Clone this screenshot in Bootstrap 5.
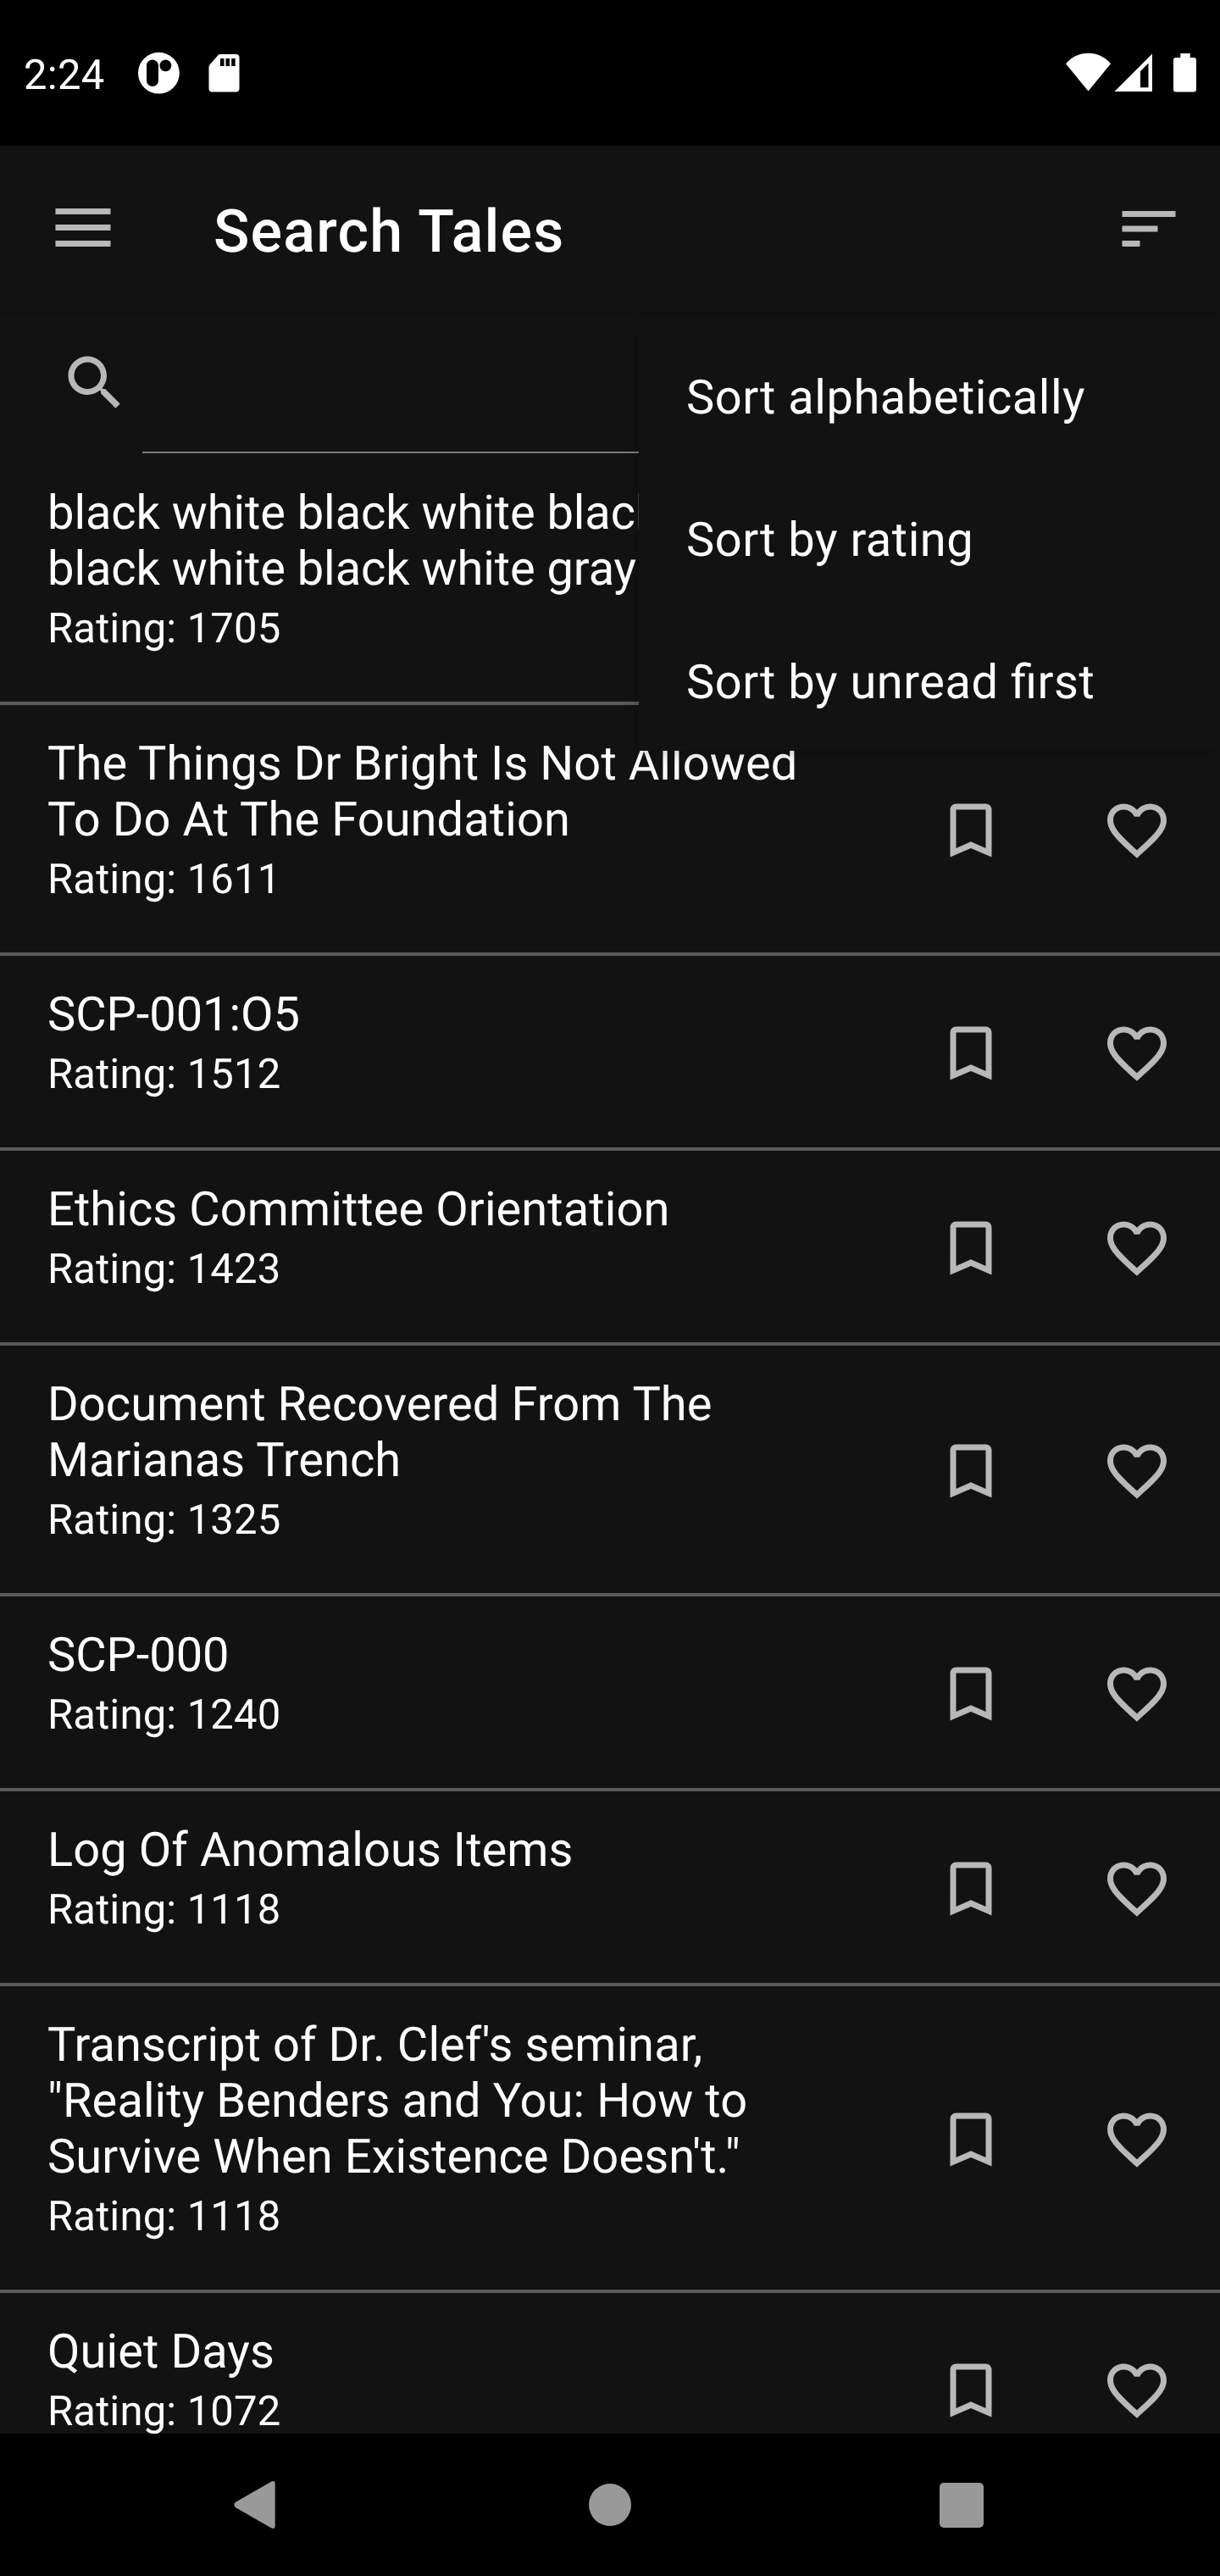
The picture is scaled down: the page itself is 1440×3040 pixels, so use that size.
<!DOCTYPE html>
<html lang="en">
<head>
<meta charset="utf-8">
<meta name="viewport" content="width=device-width, initial-scale=1">
<title>Search Tales</title>
<link href="https://cdn.jsdelivr.net/npm/bootstrap@5.3.0/dist/css/bootstrap.min.css" rel="stylesheet">
<style>
body{width:1440px;height:3040px;overflow:hidden;background:#121212;color:#fff;font-family:Roboto,sans-serif;font-size:56px;line-height:66px;text-rendering:geometricPrecision;font-feature-settings:"liga" 1,"kern" 1}
svg{display:block;flex:none}
.status-bar{height:172px;padding:0 28px}
.clock{font-size:49px;line-height:58px;padding-top:5px;width:135px;letter-spacing:.3px}
.status-sd{margin-left:34px}
.status-signal{margin-left:4px}
.status-battery{margin-left:25px}
.app-bar{height:196px;padding:0 42px 0 56px;color:#b8b8b8;box-shadow:0 1px 3px rgba(0,0,0,.18)}
.app-title{font-size:70px;line-height:82px;font-weight:500;letter-spacing:1.2px;padding-top:8px;margin-left:112px}
.search-row{height:168px;padding:0 28px 1px 70px;color:#b8b8b8}
.search-row svg{margin-top:42px}
.search-field{height:166px;border-bottom:1px solid #929292;box-shadow:0 1px #646464;margin-left:14px}
.tales{height:2336px}
.tale{border-bottom:4px solid #5a5a5a;padding:36px 56px 57px}
.tale-name{width:900px;letter-spacing:.08px}
.tale-name-tight{letter-spacing:-.07px}
.tale-rating{font-size:49px;line-height:58px;margin-top:9px;letter-spacing:.16px}
.tale-icons{gap:112px;padding-top:3px;color:#b8b8b8;height:84px;box-sizing:content-box;margin:-20px 0 -42px}
.nav-keys{height:168px;padding-left:276px}
.key-home{margin-left:370px}
.key-recent{margin-left:364px}
.sort-menu{left:754px;top:378px;width:686px;height:508px;padding-top:7px;background:#121212;box-shadow:0 5px 14px rgba(0,0,0,.2)}
.sort-menu a{height:168px;padding-left:56px;color:#fff;letter-spacing:.52px}
</style>
<script src="https://cdn.jsdelivr.net/npm/bootstrap@5.3.0/dist/js/bootstrap.bundle.min.js"></script>
</head>
<body class="d-flex flex-column position-relative">
<svg class="d-none">
<symbol id="bookmark" viewBox="0 0 24 24"><path d="M17 3H7c-1.1 0-1.99.9-1.99 2L5 21l7-3 7 3V5c0-1.1-.9-2-2-2zm0 15-5-2.18L7 18V5h10v13z"/></symbol>
<symbol id="heart" viewBox="0 0 24 24"><path d="M16.5 3c-1.74 0-3.41.81-4.5 2.09C10.91 3.81 9.24 3 7.5 3 4.42 3 2 5.42 2 8.5c0 3.78 3.4 6.86 8.55 11.54L12 21.35l1.45-1.32C18.6 15.36 22 12.28 22 8.5 22 5.42 19.58 3 16.5 3zm-4.4 15.55-.1.1-.1-.1C7.14 14.24 4 11.39 4 8.5 4 6.5 5.5 5 7.5 5c1.54 0 3.04.99 3.57 2.36h1.87C13.46 5.99 14.96 5 16.5 5c2 0 3.5 1.5 3.5 3.5 0 2.89-3.14 5.74-7.9 10.05z"/></symbol>
</svg>

<header class="status-bar bg-black d-flex align-items-center flex-shrink-0">
<span class="clock">2:24</span>
<svg width="49" height="50" viewBox="0 0 49 50"><ellipse cx="24.4" cy="25.2" rx="24.4" ry="24.4" fill="#fff"/><rect x="10" y="9.5" width="14" height="31.5" rx="7"/><circle cx="32.4" cy="16.4" r="6.9"/></svg>
<svg class="status-sd" width="37" height="50" viewBox="0 0 37 50"><path d="M13.500 3H32.500Q36.500 3 36.500 7V43.500Q36.500 47.500 32.500 47.500H4.500Q.5 47.500 .5 43.500V18Q.5 16.500 1.500 15.400L11.500 4Q12.400 3 13.500 3z" fill="#fff"/><path d="M14 8h4.500v9H14zM20.500 8H25v9h-4.500zM27.200 8h4.500v9h-4.500z"/></svg>
<svg class="ms-auto" width="53" height="50" viewBox="0 0 53 50" fill="#fff"><path d="M0 14.300C7 6 16 1.800 26.500 1.800S46 6 53 14.300L26.500 46.600z"/></svg>
<svg class="status-signal" width="45" height="50" viewBox="0 0 45 50" fill="#fff"><path fill-rule="evenodd" d="M45 2.500V47H.5zM40.500 13.500 31 23v19.300h9.500z"/></svg>
<svg class="status-battery" width="27" height="50" viewBox="0 0 27 50" fill="#fff"><path d="M8.300 2h11.400v5H24q3 0 3 3v34.500q0 3-3 3H3q-3 0-3-3V10q0-3 3-3h5.300z"/></svg>
</header>

<nav class="app-bar d-flex align-items-center flex-shrink-0 position-relative">
<svg width="84" height="84" fill="currentColor"><path d="M9.500 18h65v7h-65zM9.500 37h65v7h-65zM9.500 56h65v7h-65z"/></svg>
<h1 class="app-title text-white mb-0">Search Tales</h1>
<svg class="ms-auto" width="84" height="84" viewBox="0 0 24 24" fill="currentColor"><path d="M3 18h6v-2H3v2zM3 6v2h18V6H3zm0 7h12v-2H3v2z"/></svg>
</nav>

<div class="search-row d-flex flex-shrink-0">
<svg width="84" height="84" viewBox="0 0 24 24" fill="currentColor"><path d="M15.500 14h-.79l-.28-.27C15.410 12.590 16 11.110 16 9.500 16 5.910 13.090 3 9.500 3S3 5.910 3 9.500 5.910 16 9.500 16c1.610 0 3.090-.59 4.230-1.570l.27.28v.79l5 4.990L20.490 19l-4.990-5zm-6 0C7.010 14 5 11.990 5 9.500S7.010 5 9.500 5 14 7.010 14 9.500 11.990 14 9.500 14z"/></svg>
<div class="search-field flex-grow-1"></div>
</div>

<main class="tales overflow-hidden flex-shrink-0">
<article class="tale d-flex align-items-center justify-content-between"><div><div class="tale-name tale-name-tight">black white black white black white black white black white gray</div><div class="tale-rating">Rating: 1705</div></div><div class="tale-icons d-flex"><svg width="84" height="84" fill="currentColor"><use href="#bookmark"/></svg><svg width="84" height="84" fill="currentColor"><use href="#heart"/></svg></div></article>
<article class="tale d-flex align-items-center justify-content-between"><div><div class="tale-name">The Things Dr Bright Is Not Allowed To Do At The Foundation</div><div class="tale-rating">Rating: 1611</div></div><div class="tale-icons d-flex"><svg width="84" height="84" fill="currentColor"><use href="#bookmark"/></svg><svg width="84" height="84" fill="currentColor"><use href="#heart"/></svg></div></article>
<article class="tale d-flex align-items-center justify-content-between"><div><div class="tale-name tale-name-tight">SCP-001:O5</div><div class="tale-rating">Rating: 1512</div></div><div class="tale-icons d-flex"><svg width="84" height="84" fill="currentColor"><use href="#bookmark"/></svg><svg width="84" height="84" fill="currentColor"><use href="#heart"/></svg></div></article>
<article class="tale d-flex align-items-center justify-content-between"><div><div class="tale-name">Ethics Committee Orientation</div><div class="tale-rating">Rating: 1423</div></div><div class="tale-icons d-flex"><svg width="84" height="84" fill="currentColor"><use href="#bookmark"/></svg><svg width="84" height="84" fill="currentColor"><use href="#heart"/></svg></div></article>
<article class="tale d-flex align-items-center justify-content-between"><div><div class="tale-name">Document Recovered From The Marianas Trench</div><div class="tale-rating">Rating: 1325</div></div><div class="tale-icons d-flex"><svg width="84" height="84" fill="currentColor"><use href="#bookmark"/></svg><svg width="84" height="84" fill="currentColor"><use href="#heart"/></svg></div></article>
<article class="tale d-flex align-items-center justify-content-between"><div><div class="tale-name tale-name-tight">SCP-000</div><div class="tale-rating">Rating: 1240</div></div><div class="tale-icons d-flex"><svg width="84" height="84" fill="currentColor"><use href="#bookmark"/></svg><svg width="84" height="84" fill="currentColor"><use href="#heart"/></svg></div></article>
<article class="tale d-flex align-items-center justify-content-between"><div><div class="tale-name">Log Of Anomalous Items</div><div class="tale-rating">Rating: 1118</div></div><div class="tale-icons d-flex"><svg width="84" height="84" fill="currentColor"><use href="#bookmark"/></svg><svg width="84" height="84" fill="currentColor"><use href="#heart"/></svg></div></article>
<article class="tale d-flex align-items-center justify-content-between"><div><div class="tale-name">Transcript of Dr. Clef's seminar, "Reality Benders and You: How to Survive When Existence Doesn't."</div><div class="tale-rating">Rating: 1118</div></div><div class="tale-icons d-flex"><svg width="84" height="84" fill="currentColor"><use href="#bookmark"/></svg><svg width="84" height="84" fill="currentColor"><use href="#heart"/></svg></div></article>
<article class="tale d-flex align-items-center justify-content-between"><div><div class="tale-name">Quiet Days</div><div class="tale-rating">Rating: 1072</div></div><div class="tale-icons d-flex"><svg width="84" height="84" fill="currentColor"><use href="#bookmark"/></svg><svg width="84" height="84" fill="currentColor"><use href="#heart"/></svg></div></article>
</main>

<footer class="nav-keys bg-black d-flex align-items-center flex-shrink-0">
<svg width="49" height="56" viewBox="0 0 49 56" fill="#999"><path d="M44 .8Q48.700-1.500 48.700 3.500V52.500Q48.700 57.500 44 55.200L2.200 31.200Q-1.600 28 2.200 24.800z"/></svg>
<svg class="key-home" width="50" height="50"><circle cx="25" cy="25" r="25" fill="#999"/></svg>
<svg class="key-recent" width="52" height="53"><rect width="52" height="53" rx="5" fill="#999"/></svg>
</footer>

<div class="sort-menu position-absolute">
<a class="d-flex align-items-center text-decoration-none">Sort alphabetically</a>
<a class="d-flex align-items-center text-decoration-none">Sort by rating</a>
<a class="d-flex align-items-center text-decoration-none">Sort by unread first</a>
</div>
</body>
</html>
